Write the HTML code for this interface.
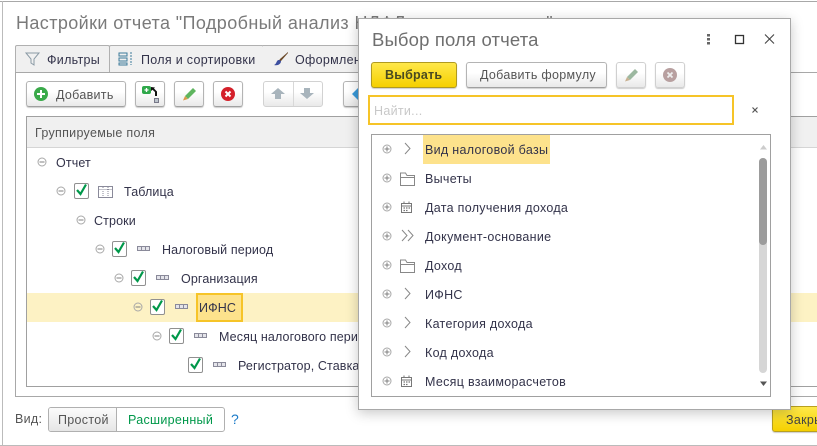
<!DOCTYPE html>
<html><head><meta charset="utf-8">
<style>
html,body{margin:0;padding:0}
body{width:817px;height:446px;overflow:hidden;background:#fff;position:relative;font-family:"Liberation Sans",sans-serif;font-size:12px;color:#3a3a4a}
.a{position:absolute}
.t{position:absolute;white-space:nowrap;line-height:16px;font-size:12.5px;letter-spacing:.3px;color:#33334a;margin-top:1px}
.n{letter-spacing:.12px}
.btn{position:absolute;box-sizing:border-box;border:1px solid #b4b4b4;border-bottom-color:#a0a0a0;border-radius:3px;background:linear-gradient(#fff 40%,#e9e9e9);box-shadow:0 1px 1px #ccc}
.line{position:absolute;background:#a8a8a8}
svg{position:absolute;overflow:visible}
</style></head><body>
<!-- outer window -->
<div class="line" style="left:0;top:1px;width:817px;height:1px"></div>
<div class="line" style="left:2px;top:1px;width:1px;height:445px;background:#bbb"></div>
<div class="line" style="left:0;top:445px;width:817px;height:1px;background:#bbb"></div>
<div class="t" style="left:16px;top:10px;font-size:18px;line-height:24px;letter-spacing:.4px;color:#7a7a7a">Настройки отчета "Подробный анализ НДФЛ за все периоды"</div>
<!-- tabs -->
<div class="line" style="left:15px;top:72px;width:802px;height:1px"></div>
<div class="line" style="left:15px;top:72px;width:1px;height:324px"></div>
<div class="line" style="left:15px;top:396px;width:802px;height:1px"></div>
<div class="a" style="left:15px;top:45px;width:95px;height:27px;box-sizing:border-box;border:1px solid #b0b0b0;border-bottom:0;background:#f0f0f0;border-radius:2px 2px 0 0"></div>
<div class="a" style="left:109px;top:45px;width:155px;height:27px;box-sizing:border-box;border:1px solid #b0b0b0;border-bottom:0;background:#f0f0f0;border-radius:2px 2px 0 0"></div>
<div class="a" style="left:263px;top:45px;width:100px;height:27px;box-sizing:border-box;border-top:1px solid #b0b0b0;background:#f0f0f0"></div>
<svg style="left:25px;top:52px" width="15" height="14"><path d="M1 1H14L9 7V13L6 11V7Z" fill="none" stroke="#8a9aa5"/></svg>
<div class="t" style="left:47px;top:51px">Фильтры</div>
<svg style="left:118px;top:51px" width="16" height="15"><g fill="none" stroke="#3d7a9a"><path d="M1 2H9V5H1ZM1 7H9V10H1ZM1 12H9V14H1Z"/><path d="M13 1V14" stroke-dasharray="2 1"/></g></svg>
<div class="t" style="left:141px;top:51px">Поля и сортировки</div>
<svg style="left:273px;top:51px" width="16" height="15"><path d="M15 1L7 8L5 11L8 10L15 2Z" fill="#6b4a2a"/><path d="M6 9C3 9 4 13 1 14C5 15 8 13 8 10Z" fill="#3d4fa0"/></svg>
<div class="t" style="left:295px;top:51px">Оформление</div>
<!-- toolbar -->
<div class="btn" style="left:26px;top:81px;width:100px;height:26px"></div>
<svg style="left:34px;top:87px" width="14" height="14"><circle cx="7" cy="7" r="7" fill="#3aaa4a"/><path d="M7 3V11M3 7H11" stroke="#fff" stroke-width="2"/></svg>
<div class="t" style="left:56px;top:86px;color:#555">Добавить</div>
<div class="btn" style="left:135px;top:81px;width:30px;height:26px"></div>
<svg style="left:142px;top:86px" width="16" height="17"><rect x="0" y="0" width="9" height="8" rx="2" fill="#2fa84a"/><path d="M4.500 2V6M2.500 4H6.500" stroke="#fff" stroke-width="1.300"/><path d="M9 1L9 5L10.500 3.800L13 6V10H15V5.500L12 2.500L13 1.500Z" fill="#111"/><rect x="12.500" y="12.500" width="4" height="4" fill="#bcc4cc" stroke="#778"/></svg>
<div class="btn" style="left:174px;top:81px;width:30px;height:26px"></div>
<svg style="left:182px;top:86px" width="15" height="15"><path d="M3 10L11 2L14 5L6 13Z" fill="#5fb55f"/><path d="M3 10L6 13L1 14.500Z" fill="#d99a4a"/></svg>
<div class="btn" style="left:213px;top:81px;width:30px;height:26px"></div>
<svg style="left:221px;top:87px" width="14" height="14"><circle cx="7" cy="7" r="7" fill="#d4202a"/><path d="M4.500 4.500L9.500 9.500M9.500 4.500L4.500 9.500" stroke="#fff" stroke-width="2"/></svg>
<div class="btn" style="left:263px;top:81px;width:60px;height:26px;border-color:#d2d2d2;box-shadow:none"></div>
<div class="a" style="left:293px;top:82px;width:1px;height:24px;background:#d8d8d8"></div>
<svg style="left:270px;top:87px" width="16" height="13"><path d="M8 1L15 7H11V12H5V7H1Z" fill="#a8b4bc"/></svg>
<svg style="left:299px;top:87px" width="16" height="13"><path d="M8 12L15 6H11V1H5V6H1Z" fill="#a8b4bc"/></svg>
<div class="btn" style="left:343px;top:81px;width:20px;height:26px"></div>
<svg style="left:351px;top:87px" width="9" height="14"><path d="M8 0L1 7L8 14Z" fill="#3a9ad9"/></svg>
<!-- table -->
<div class="a" style="left:26px;top:116px;width:791px;height:271px;box-sizing:border-box;border:1px solid #a0a0a0;border-right:0"></div>
<div class="a" style="left:27px;top:117px;width:790px;height:30px;background:#f0f0f0;border-bottom:1px solid #d5d5d5"></div>
<div class="t" style="left:35px;top:124px;color:#555">Группируемые поля</div>
<div class="a" style="left:27px;top:293px;width:790px;height:29px;background:#fdf2c4"></div>
<div class="a" style="left:196px;top:293px;width:47px;height:29px;box-sizing:border-box;border:2px solid #f6c428;background:#fde28c"></div>

<svg style="left:0;top:1px" width="360" height="400">
<defs>
<g id="m"><circle cx="5" cy="5" r="4" fill="none" stroke="#a8a8a8"/><path d="M2.500 5H7.500" stroke="#808080"/></g>
<g id="c"><rect x=".5" y=".5" width="14" height="15" rx="1.500" fill="#fff" stroke="#909090"/><path d="M3 7L6.500 11L12 1.500" fill="none" stroke="#00984a" stroke-width="2.200"/></g>
<g id="d" fill="#e4e4ea" stroke="#8a8a9a"><rect x=".5" y=".5" width="12" height="4"/><path d="M4.500 .5V4.500M8.500 .5V4.500"/></g>
</defs>
<use href="#m" x="37" y="156"/>
<use href="#m" x="56" y="185"/><use href="#c" x="74" y="182"/>
<g fill="none" stroke="#8a8a9a"><rect x="98.500" y="185.500" width="14" height="11"/><path d="M98.500 188.500H112.500M103 186V196M108 186V196" stroke-dasharray="1 1"/></g>
<use href="#m" x="76" y="214"/>
<use href="#m" x="95" y="243"/><use href="#c" x="112" y="240"/><use href="#d" x="137" y="245"/>
<use href="#m" x="114" y="272"/><use href="#c" x="131" y="269"/><use href="#d" x="156" y="274"/>
<use href="#m" x="133" y="301"/><use href="#c" x="150" y="298"/><use href="#d" x="175" y="303"/>
<use href="#m" x="152" y="330"/><use href="#c" x="169" y="327"/><use href="#d" x="194" y="332"/>
<use href="#c" x="188" y="356"/><use href="#d" x="213" y="361"/>
</svg>
<div class="t n" style="left:56px;top:154px">Отчет</div>
<div class="t n" style="left:124px;top:183px">Таблица</div>
<div class="t n" style="left:94px;top:212px">Строки</div>
<div class="t n" style="left:162px;top:241px">Налоговый период</div>
<div class="t n" style="left:181px;top:270px">Организация</div>
<div class="t n" style="left:199px;top:299px">ИФНС</div>
<div class="t n" style="left:219px;top:328px">Месяц налогового периода</div>
<div class="t n" style="left:238px;top:357px">Регистратор, Ставка</div>
<!-- bottom -->
<div class="t" style="left:15px;top:410px;color:#555">Вид:</div>
<div class="a" style="left:48px;top:407px;width:177px;height:25px;box-sizing:border-box;border:1px solid #b0b0b0;border-radius:3px;background:#fff"></div>
<div class="a" style="left:49px;top:408px;width:67px;height:23px;background:linear-gradient(#fbfbfb,#e6e6e6);border-right:1px solid #b0b0b0;border-radius:2px 0 0 2px"></div>
<div class="t" style="left:58px;top:411px;color:#555">Простой</div>
<div class="t" style="left:128px;top:411px;color:#00984a">Расширенный</div>
<div class="t" style="left:231px;top:410px;color:#1a7ac8;font-weight:normal;font-size:14px">?</div>
<div class="btn" style="left:772px;top:406px;width:60px;height:26px;background:linear-gradient(#ffe94a,#f5d000);border-color:#b8a020"></div>
<div class="t" style="left:786px;top:411px;color:#444">Закрыть</div>

<!-- dialog -->
<div class="a" style="left:358px;top:18px;width:433px;height:392px;box-sizing:border-box;background:#fff;border:1px solid #a8a8a8;box-shadow:0 3px 12px rgba(0,0,0,.22)"></div>
<div class="t" style="left:372px;top:27px;font-size:18.500px;line-height:24px;letter-spacing:.15px;color:#6f6f6f">Выбор поля отчета</div>
<svg style="left:700px;top:30px" width="85" height="18"><g fill="#666"><rect x="7" y="4" width="3" height="2.500"/><rect x="7" y="8" width="3" height="2.500"/><rect x="7" y="12" width="3" height="2.500"/></g><rect x="35.500" y="5.500" width="8" height="8" fill="none" stroke="#333" stroke-width="1.300"/><path d="M65 4.500L74 13.500M74 4.500L65 13.500" stroke="#444" stroke-width="1.100"/></svg>
<div class="btn" style="left:371px;top:62px;width:86px;height:26px;background:linear-gradient(#ffe84a,#f5d000);border-color:#b09a20"></div>
<div class="t" style="left:385px;top:66px;font-weight:bold;color:#4a4a20;letter-spacing:.2px">Выбрать</div>
<div class="btn" style="left:466px;top:62px;width:141px;height:26px"></div>
<div class="t" style="left:480px;top:66px;color:#555">Добавить формулу</div>
<div class="btn" style="left:616px;top:62px;width:30px;height:26px;border-color:#d0d0d0"></div>
<svg style="left:624px;top:67px" width="15" height="15"><path d="M3 10L11 2L14 5L6 13Z" fill="#9cb8a0"/><path d="M3 10L6 13L1 14.500Z" fill="#c8b090"/></svg>
<div class="btn" style="left:655px;top:62px;width:30px;height:26px;border-color:#d0d0d0"></div>
<svg style="left:663px;top:68px" width="14" height="14"><circle cx="7" cy="7" r="7" fill="#b8a0a0"/><path d="M4.500 4.500L9.500 9.500M9.500 4.500L4.500 9.500" stroke="#eee" stroke-width="1.800"/></svg>
<div class="a" style="left:368px;top:95px;width:366px;height:30px;box-sizing:border-box;border:2px solid #f6c428;background:#fff"></div>
<div class="t" style="left:374px;top:102px;color:#c8c8c8">Найти...</div>
<svg style="left:751px;top:106px" width="8" height="8"><path d="M1.500 1.500L6.500 6.500M6.500 1.500L1.500 6.500" stroke="#555" stroke-width="1.200"/></svg>
<!-- list -->
<div class="a" style="left:371px;top:134px;width:400px;height:263px;box-sizing:border-box;border:1px solid #a0a0a0"></div>
<div class="a" style="left:423px;top:135px;width:127px;height:29px;background:#fde28c"></div>
<svg style="left:370px;top:130px" width="60" height="270">
<defs>
<g id="p"><circle cx="5" cy="5" r="4" fill="none" stroke="#a8a8a8"/><path d="M2.500 5H7.500M5 2.500V7.500" stroke="#808080"/></g>
<path id="ch" d="M0 0L5 5.500L0 11" fill="none" stroke="#888"/>
<path id="fo" d="M.5 2V13.500H14.500V3.500H7L5.500 1H.5V5.500H14.500" fill="none" stroke="#888"/>
<g id="ca" fill="none" stroke="#777"><rect x=".5" y="2.500" width="10" height="9"/><path d="M.5 5H10.500M3 .5V3M8 .5V3" /><path d="M2.500 7H4M5 7H6.500M7.500 7H9M2.500 9.500H4M5 9.500H6.500" stroke-width="1.200"/></g>
</defs>
<use href="#p" x="12" y="14"/><use href="#ch" x="35" y="13"/>
<use href="#p" x="12" y="43"/><use href="#fo" x="30" y="42"/>
<use href="#p" x="12" y="72"/><use href="#ca" x="31" y="71"/>
<use href="#p" x="12" y="101"/><path d="M32 100L37 105.500L32 111M38 100L43 105.500L38 111" fill="none" stroke="#888"/>
<use href="#p" x="12" y="130"/><use href="#fo" x="30" y="129"/>
<use href="#p" x="12" y="159"/><use href="#ch" x="35" y="158"/>
<use href="#p" x="12" y="188"/><use href="#ch" x="35" y="187"/>
<use href="#p" x="12" y="217"/><use href="#ch" x="35" y="216"/>
<use href="#p" x="12" y="246"/><use href="#ca" x="31" y="245"/>
</svg>
<div class="t" style="left:425px;top:141px">Вид налоговой базы</div>
<div class="t" style="left:425px;top:170px">Вычеты</div>
<div class="t" style="left:425px;top:199px">Дата получения дохода</div>
<div class="t" style="left:425px;top:228px">Документ-основание</div>
<div class="t" style="left:425px;top:257px">Доход</div>
<div class="t" style="left:425px;top:286px">ИФНС</div>
<div class="t" style="left:425px;top:315px">Категория дохода</div>
<div class="t" style="left:425px;top:344px">Код дохода</div>
<div class="t" style="left:425px;top:373px">Месяц взаиморасчетов</div>
<!-- scrollbar -->
<svg style="left:760px;top:144px" width="8" height="6"><path d="M0 5.500L3.500 1L7 5.500Z" fill="#ccc"/></svg>
<svg style="left:760px;top:381px" width="8" height="6"><path d="M0 .5L3.500 5L7 .5Z" fill="#555"/></svg>
<div class="a" style="left:759px;top:158px;width:8px;height:215px;border-radius:4px;background:#d6d6d6"></div>
<div class="a" style="left:759px;top:158px;width:8px;height:87px;border-radius:4px;background:#9c9c9c"></div>
</body></html>
